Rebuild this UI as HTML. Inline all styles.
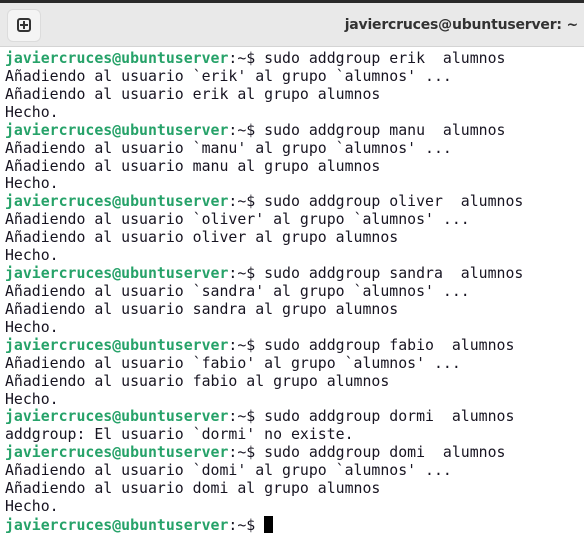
<!DOCTYPE html>
<html><head><meta charset="utf-8"><style>
html,body{margin:0;padding:0;width:584px;height:540px;overflow:hidden;background:#fff}
.hdr{position:absolute;left:0;top:0;width:584px;height:47px;background:#e9e9e9;border-top:3px solid #2a2a2a;box-sizing:border-box;border-bottom:1px solid #d4d4d4}
.btn{position:absolute;left:7px;top:6px;width:34px;height:33px;background:#f4f4f4;border-radius:6px;border:1px solid #dcdcdc;box-sizing:border-box}
.btn span{position:absolute;left:9px;top:8px;width:14px;height:14px;border:2px solid #333;border-radius:3px;box-sizing:border-box}
.btn span:before{content:"";position:absolute;left:4px;top:1px;width:2px;height:8px;background:#333}
.btn span:after{content:"";position:absolute;left:1px;top:4px;width:8px;height:2px;background:#333}
.title{position:absolute;right:6px;top:14px;font:bold 14px "DejaVu Sans","Liberation Sans",sans-serif;color:#333;letter-spacing:-0.2px}
pre{position:absolute;left:5px;top:50px;margin:0;font:14.85px/17.92px "DejaVu Sans Mono","Liberation Mono",monospace;color:#171421}
.p{color:#26a269;font-weight:bold}
.cur{display:inline-block;width:9px;height:17px;background:#000;vertical-align:-3px}
</style></head><body>
<div class="hdr"><div class="btn"><span></span></div><div class="title">javiercruces@ubuntuserver: ~</div></div>
<pre><span class="p">javiercruces@ubuntuserver</span>:~$ sudo addgroup erik  alumnos
Añadiendo al usuario `erik' al grupo `alumnos' ...
Añadiendo al usuario erik al grupo alumnos
Hecho.
<span class="p">javiercruces@ubuntuserver</span>:~$ sudo addgroup manu  alumnos
Añadiendo al usuario `manu' al grupo `alumnos' ...
Añadiendo al usuario manu al grupo alumnos
Hecho.
<span class="p">javiercruces@ubuntuserver</span>:~$ sudo addgroup oliver  alumnos
Añadiendo al usuario `oliver' al grupo `alumnos' ...
Añadiendo al usuario oliver al grupo alumnos
Hecho.
<span class="p">javiercruces@ubuntuserver</span>:~$ sudo addgroup sandra  alumnos
Añadiendo al usuario `sandra' al grupo `alumnos' ...
Añadiendo al usuario sandra al grupo alumnos
Hecho.
<span class="p">javiercruces@ubuntuserver</span>:~$ sudo addgroup fabio  alumnos
Añadiendo al usuario `fabio' al grupo `alumnos' ...
Añadiendo al usuario fabio al grupo alumnos
Hecho.
<span class="p">javiercruces@ubuntuserver</span>:~$ sudo addgroup dormi  alumnos
addgroup: El usuario `dormi' no existe.
<span class="p">javiercruces@ubuntuserver</span>:~$ sudo addgroup domi  alumnos
Añadiendo al usuario `domi' al grupo `alumnos' ...
Añadiendo al usuario domi al grupo alumnos
Hecho.
<span class="p">javiercruces@ubuntuserver</span>:~$ <span class="cur"></span></pre>
</body></html>
